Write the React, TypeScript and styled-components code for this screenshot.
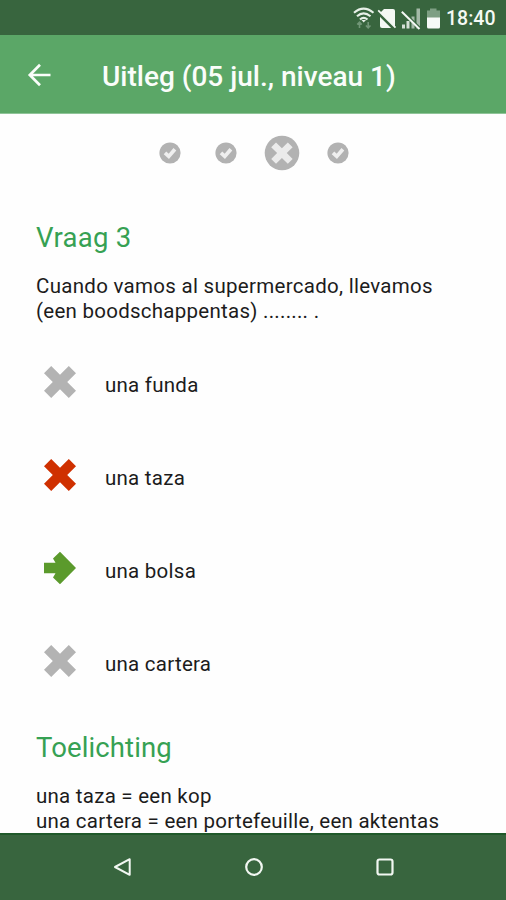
import React from "react";
import styled, { createGlobalStyle } from "styled-components";

const GlobalStyle = createGlobalStyle`
  * { box-sizing: border-box; }
  body { margin: 0; background: #fff; font-family: Roboto, "Liberation Sans", sans-serif; }
`;

const Screen = styled.div`
  display: flex;
  flex-direction: column;
  width: 506px;
  height: 900px;
  overflow: hidden;
  background: #fefefe;
`;

const StatusBar = styled.div`
  display: flex;
  align-items: center;
  justify-content: flex-end;
  flex: 0 0 35px;
  padding: 3px 11px 0 0;
  background: #38653e;
`;

const StatusIcons = styled.svg`
  display: block;
  width: 92px;
  height: 24px;
`;

const Clock = styled.span`
  width: 49px;
  margin-left: 2px;
  color: #f5faf5;
  font-size: 19.5px;
  font-weight: 500;
  line-height: 24px;
  white-space: nowrap;
`;

const AppBar = styled.header`
  display: flex;
  align-items: center;
  flex: 0 0 79px;
  padding: 6px 0 0 26px;
  background: #5ba767;
  border-bottom: 1px solid #8fc498;
`;

const BackButton = styled.button`
  display: flex;
  width: 76px;
  padding: 0;
  border: 0;
  background: none;
  margin-top: -4px;
`;

const Title = styled.h1`
  margin: 0;
  color: #fafdfa;
  font-size: 28px;
  font-weight: 500;
  line-height: 32px;
  letter-spacing: 0;
  white-space: nowrap;
`;

const Content = styled.main`
  flex: 1 1 0;
  min-height: 0;
  padding: 0 36px;
  overflow: hidden;
`;

const Progress = styled.div`
  display: flex;
  justify-content: center;
  height: 78px;
  margin-left: 2px;
`;

const Step = styled.div`
  display: flex;
  align-items: center;
  justify-content: center;
  width: 56.3px;
  height: 78px;
`;

const Heading = styled.h2<{ $spacing: number }>`
  margin: 0;
  color: #36a153;
  font-size: 27.5px;
  font-weight: 400;
  line-height: 32px;
  letter-spacing: ${(p) => p.$spacing}px;
`;

const Paragraph = styled.p`
  margin: 0;
  color: #1c1c1c;
  font-size: 20.5px;
  line-height: 25.3px;
`;

const Line = styled.span<{ $spacing: number }>`
  display: block;
  letter-spacing: ${(p) => p.$spacing}px;
  white-space: nowrap;
`;

const Question = styled.section`
  padding: 30px 0 0;
  ${Paragraph} { margin-top: 20px; }
`;

const Answers = styled.ul`
  display: flex;
  flex-direction: column;
  gap: 57px;
  margin: 41px 0 0;
  padding: 0 0 0 6px;
  list-style: none;
`;

const Answer = styled.li`
  display: flex;
  align-items: center;
  height: 36px;

  svg { margin-top: -3px; }
`;

const AnswerText = styled.span`
  margin: 3px 0 0 27px;
  color: #1c1c1c;
  font-size: 20.5px;
  line-height: 26px;
  letter-spacing: 0.25px;
`;

const Explanation = styled.section`
  padding-top: 51.4px;
  ${Paragraph} { margin-top: 20px; }
`;

const NavBar = styled.nav`
  display: flex;
  align-items: center;
  justify-content: space-between;
  flex: 0 0 67px;
  padding: 0 109px 2px 110px;
  background: #38653e;
  border-top: 2px solid #20592a;
`;

const GREY = "#b3b3b3";
const CROSS = "M7.2 0 L16 8.8 L24.8 0 L32 7.2 L23.2 16 L32 24.8 L24.8 32 L16 23.2 L7.2 32 L0 24.8 L8.8 16 L0 7.2 Z";

function Cross({ color }: { color: string }) {
  return (
    <svg width="36" height="36" viewBox="-2 -2 36 36">
      <path d={CROSS} fill={color} />
    </svg>
  );
}

function Arrow() {
  return (
    <svg width="36" height="36" viewBox="0 0 36 36">
      <path d="M2 12.7 H13.5 L11 8.5 L18 1.8 L34 18 L18 34.2 L11 27.6 L13.5 23.3 H2 Z" fill="#5b9a2c" />
    </svg>
  );
}

function CheckDot() {
  return (
    <svg width="22" height="22" viewBox="0 0 22 22">
      <circle cx="11" cy="11" r="10.6" fill="#b2b2b2" />
      <path d="M6 10.8 L9.8 14.4 L15.9 7.2" fill="none" stroke="#efefef" strokeWidth="3.7" />
    </svg>
  );
}

function CrossDot() {
  return (
    <svg width="36" height="36" viewBox="0 0 36 36">
      <circle cx="18" cy="18" r="17.3" fill="#b2b2b2" />
      <path transform="translate(7.2 7.4) scale(0.67)" d={CROSS} fill="#ebebeb" />
    </svg>
  );
}

const steps = [true, true, false, true];

const answers = [
  { text: "una funda", icon: <Cross color={GREY} /> },
  { text: "una taza", icon: <Cross color="#cf3000" /> },
  { text: "una bolsa", icon: <Arrow /> },
  { text: "una cartera", icon: <Cross color={GREY} /> },
];

export default function App() {
  return (
    <Screen>
      <GlobalStyle />
      <StatusBar>
        <StatusIcons viewBox="350 6.5 92 24">
          <g fill="none" stroke="#e8f0e8" strokeWidth="2.1">
            <path d="M352 12.2 Q361.5 4 371.5 12.2" />
            <path d="M355 15.8 Q361.5 9.8 368.5 15.8" />
            <path d="M358 19 Q361.5 15.6 365.5 19" />
          </g>
          <path d="M359.5 19.5 H364 L361.7 22 Z" fill="#e8f0e8" />
          <path d="M357.5 27.5 V22 M355.2 24 L357.5 21.7 L359.8 24 M366.2 21.5 V27 M363.9 25 L366.2 27.3 L368.5 25" fill="none" stroke="#719677" strokeWidth="1.6" />
          <path d="M382 8.5 H391 Q393 8.5 393 10.5 V25.5 Q393 27.5 391 27.5 H380 Q378 27.5 378 25.5 V12.5 Z" fill="#f4f8f4" />
          <path d="M375.5 11.5 L392.5 28.5" stroke="#38653e" strokeWidth="3.2" />
          <path d="M376.2 9.8 L393.5 27.2" stroke="#f4f8f4" strokeWidth="1.7" />
          <g fill="#d5dfd6">
            <rect x="400" y="24" width="3" height="4" />
            <rect x="404.5" y="20.5" width="3" height="7.5" />
            <rect x="409.5" y="16" width="3" height="12" fill="#a4b9a7" />
            <rect x="414.5" y="8" width="3.5" height="20" fill="#a4b9a7" />
          </g>
          <path d="M400.5 11 L418 28" stroke="#38653e" strokeWidth="3" />
          <path d="M399.8 11.2 L417.5 28.5" stroke="#f4f8f4" strokeWidth="2" />
          <path d="M428 8 H434.5 V10 H438 V18 H425 V10 H428 Z" fill="#7e9f83" />
          <path d="M425 17 H438 V26.5 Q438 28 436.5 28 H426.5 Q425 28 425 26.5 Z" fill="#f7faf7" />
        </StatusIcons>
        <Clock>18:40</Clock>
      </StatusBar>
      <AppBar>
        <BackButton aria-label="Terug">
          <svg width="26" height="24" viewBox="0 0 26 24" fill="none" stroke="#fafdfa" strokeWidth="2.7">
            <path d="M24.5 12 H3.8 M14 1.8 L3.8 12 L14 22.2" />
          </svg>
        </BackButton>
        <Title>Uitleg (05 jul., niveau 1)</Title>
      </AppBar>
      <Content>
        <Progress>
          {steps.map((correct, i) => (
            <Step key={i}>{correct ? <CheckDot /> : <CrossDot />}</Step>
          ))}
        </Progress>
        <Question>
          <Heading $spacing={0.3}>Vraag 3</Heading>
          <Paragraph>
            <Line $spacing={0.29}>Cuando vamos al supermercado, llevamos</Line>
            <Line $spacing={0.26}>(een boodschappentas) ........ .</Line>
          </Paragraph>
        </Question>
        <Answers>
          {answers.map(({ text, icon }) => (
            <Answer key={text}>
              {icon}
              <AnswerText>{text}</AnswerText>
            </Answer>
          ))}
        </Answers>
        <Explanation>
          <Heading $spacing={0.12}>Toelichting</Heading>
          <Paragraph>
            <Line $spacing={0.25}>una taza = een kop</Line>
            <Line $spacing={0.25}>una cartera = een portefeuille, een aktentas</Line>
          </Paragraph>
        </Explanation>
      </Content>
      <NavBar>
        <svg width="24" height="24" viewBox="0 0 24 24" fill="none" stroke="#f2f7f2" strokeWidth="2">
          <path d="M19.7 4.2 V19.8 L5 12 Z" strokeLinejoin="round" />
        </svg>
        <svg width="24" height="24" viewBox="0 0 24 24" fill="none" stroke="#f2f7f2" strokeWidth="2.2">
          <circle cx="12" cy="12" r="7.8" />
        </svg>
        <svg width="24" height="24" viewBox="0 0 24 24" fill="none" stroke="#f2f7f2" strokeWidth="2.2">
          <rect x="4.5" y="4.5" width="15" height="15" rx="2" />
        </svg>
      </NavBar>
    </Screen>
  );
}
